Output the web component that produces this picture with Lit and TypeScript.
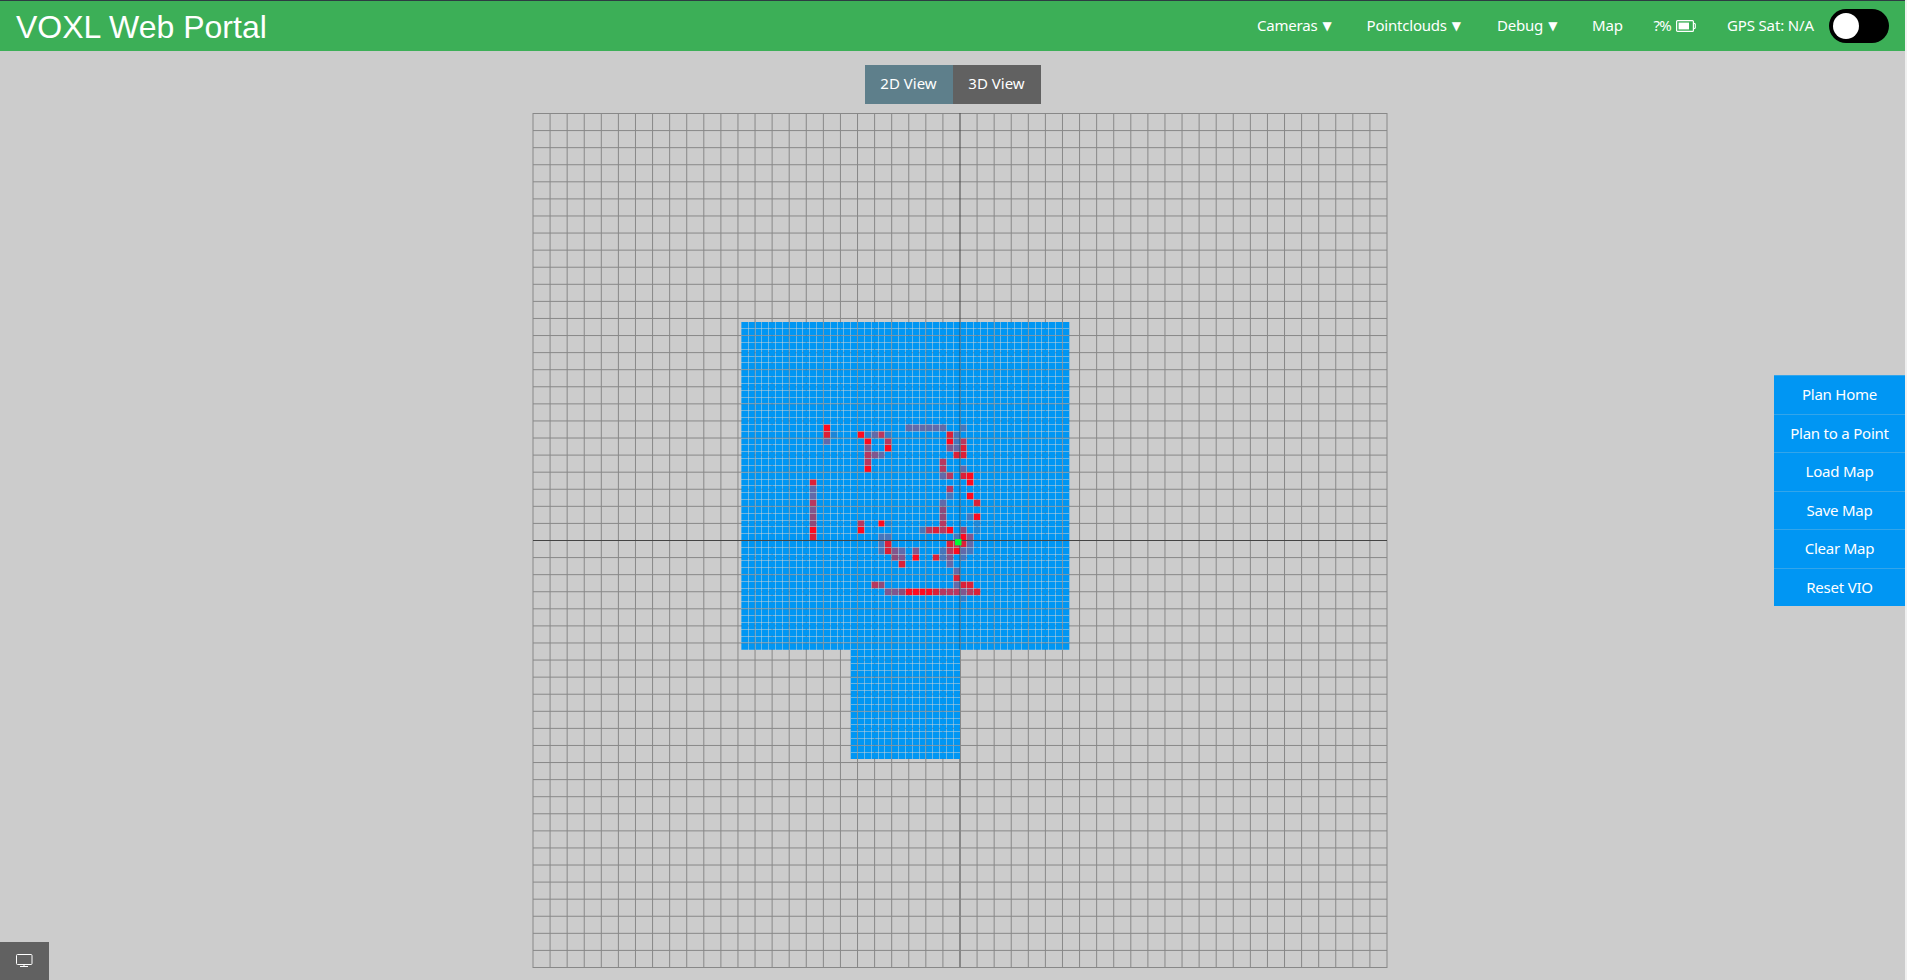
import { LitElement, html, svg, css } from "lit";
import { customElement } from "lit/decorators.js";

const UNIT = 17.08;
const VOXEL = UNIT * 0.4;

/** Occupied voxels as "row: column:heat"; heat runs from 1 (faint) to 9 (solid red). */
const COST: Record<number, string> = {
  15: "12:9 24:4 25:4 26:4 27:4 28:4 29:4 32:3",
  16: "12:8 13:1 17:9 18:2 19:4 20:7 21:2 30:8 31:3",
  17: "12:4 18:9 21:7 30:9 31:3 32:7",
  18: "18:5 21:9 30:5 31:4 32:8",
  19: "18:7 19:5 20:4 31:8 32:8",
  20: "18:7 29:7",
  21: "18:9 29:7 32:4",
  22: "29:4 30:7 32:8 33:9",
  23: "10:8 33:9",
  24: "10:4 30:7",
  25: "10:4 30:3 33:9",
  26: "10:7 29:4 34:8",
  27: "10:5 29:6",
  28: "10:6 29:6 33:3 34:9",
  29: "10:6 17:7 20:9 21:1 29:7 34:1",
  30: "10:9 17:9 26:3 27:7 28:8 29:7 30:9 32:6 34:1",
  31: "10:8 20:3 21:3 31:3 32:9 33:5",
  32: "20:3 21:8 30:8 31:7 32:8 33:4",
  33: "20:3 21:8 22:5 23:4 25:5 29:3 30:7 31:9 32:4 33:3",
  34: "22:6 23:5 25:9 28:8 29:3 30:5 32:3",
  35: "23:8 30:4",
  36: "31:4",
  37: "31:8",
  38: "19:7 20:6 31:4 32:8 33:8",
  39: "21:5 22:5 23:6 24:9 25:9 26:9 27:9 28:8 29:7 30:7 31:7 32:5 33:7 34:8",
  40: "32:2",
};

const HEAT: Record<string, string> = {
  "1": "#1c86d8", "2": "#2f7fcc", "3": "#4577bd", "4": "#616aaa",
  "5": "#80578f", "6": "#8f4a7a", "7": "#b83860", "8": "#dc2038", "9": "#ff0a20",
};

@customElement("map-canvas")
export class MapCanvas extends LitElement {
  static styles = css`
    :host { display: block; width: 856px; height: 856px; }
    svg { display: block; }
    .cell { stroke: #888; stroke-width: 1; }
    .axis { stroke: #444; stroke-width: 1; }
    .floor { fill: #0096f3; }
    .gap { stroke: #d4d4d4; stroke-width: 1; stroke-opacity: 0.5; shape-rendering: crispEdges; }
    .major { stroke: #808080; stroke-width: 1; stroke-opacity: 0.6; }
    .minor { stroke: #50708c; stroke-width: 1.2; stroke-opacity: 0.5; stroke-dasharray: 1.6 5.232; stroke-dashoffset: 0.8; }
    .dim { stroke: #1c4866; stroke-width: 1.6; stroke-opacity: 0.55; }
    .drone { fill: #00ff33; }
  `;

  private grid() {
    return Array.from({ length: 51 }, (_, i) => {
      const p = i * UNIT;
      const cls = i === 25 ? "axis" : "cell";
      return svg`<line class=${cls} x1=${1 + p} x2=${1 + p} y1="1" y2="856"></line>
        <line class=${cls} y1=${1.5 + p} y2=${1.5 + p} x1="1" x2="855"></line>`;
    });
  }

  /** Ground grid lines showing through the seams between voxels. */
  private seams(v: (n: number) => number) {
    const out = [];
    for (let n = -12; n <= 12; n++) {
      const p = 32 + n * 2.5;
      const cls = n % 2 === 0 ? "major" : "minor";
      if (p > 0 && p < 48) {
        const end = p > 16 && p < 32 ? 64 : 48;
        out.push(svg`<line class=${p === 32 ? "dim" : cls} x1=${v(p)} x2=${v(p)} y1="0" y2=${v(end)}></line>`);
      }
      if (p > 0 && p < 64)
        out.push(svg`<line class=${cls} y1=${v(p)} y2=${v(p)} x1=${p < 48 ? 0 : v(16)} x2=${v(p < 48 ? 48 : 32)}></line>`);
    }
    return out;
  }

  render() {
    const c = UNIT * 25;
    const x0 = 1 + c - 32 * VOXEL;
    const y0 = 1.5 + c - 32 * VOXEL;
    const v = (n: number) => n * VOXEL;
    return html`<svg width="856" height="856">
      ${this.grid()}
      <g transform="translate(${x0} ${y0})">
        <path class="floor" d="M0 0H${v(48)}V${v(48)}H${v(32)}V${v(64)}H${v(16)}V${v(48)}H0Z"></path>
        ${Object.entries(COST).map(([row, cells]) =>
          cells.split(" ").map((s) => {
            const [col, heat] = s.split(":");
            return svg`<rect x=${v(+col)} y=${v(+row)} width=${VOXEL} height=${VOXEL} fill=${HEAT[heat]}></rect>`;
          })
        )}
        ${Array.from({ length: 47 }, (_, i) => i + 1).map((i) =>
          svg`<line class="gap" x1=${v(i)} x2=${v(i)} y1="0" y2=${v(i > 16 && i < 32 ? 64 : 48)}></line>`)}
        ${Array.from({ length: 63 }, (_, i) => i + 1).map((i) =>
          svg`<line class="gap" y1=${v(i)} y2=${v(i)} x1=${i < 48 ? 0 : v(16)} x2=${v(i < 48 ? 48 : 32)}></line>`)}
        ${this.seams(v)}
      </g>
      <line class="axis" x1="1" x2="855" y1=${1.5 + c} y2=${1.5 + c}></line>
      <rect class="drone" x="423" y="427" width="6.5" height="6.3"></rect>
    </svg>`;
  }
}

@customElement("app-root")
export class AppRoot extends LitElement {
  static styles = css`
    :host { display: block; position: relative; box-sizing: border-box; height: 980px; overflow: hidden;
      background: #ccc; border-right: 2px solid #f0f0f0; font: 15px "Noto Sans", sans-serif; color: #fff; }
    header { display: flex; align-items: center; box-sizing: border-box; height: 51px; border-top: 1px solid #2d3c42;
      background: #3caf57; padding: 0 16px; }
    h1 { font: 32px "Liberation Sans", sans-serif; margin: 0 auto 0 0; padding-top: 3px; }
    nav { display: grid; grid-template-columns: 109.5px 130.5px 95px 61.5px 73.5px 102px 60px; align-items: center; }
    nav span { white-space: nowrap; line-height: 20px; }
    nav > span { padding-bottom: 2px; letter-spacing: -0.15px; }
    nav > .menu { letter-spacing: -0.2px; }
    .arrow { display: inline-block; margin-left: 5px; letter-spacing: 0; font: 12px "DejaVu Sans", sans-serif;
      transform: translateY(-1px); }
    nav > .power { display: flex; align-items: center; gap: 5px; letter-spacing: -0.8px; }
    .power svg { margin-top: 1px; }
    .switch { width: 60px; height: 34px; border-radius: 17px; background: #000; padding: 4px; box-sizing: border-box; }
    .knob { width: 26px; height: 26px; border-radius: 50%; background: #fff; }
    .tabs { display: flex; justify-content: center; margin: 14px 0 8px; }
    .tab { width: 88px; height: 39px; line-height: 37px; text-align: center; background: #616161; }
    .on { background: #5e7f8b; }
    map-canvas { margin-left: 532px; }
    .actions { position: absolute; right: 0; top: 375px; width: 131px; }
    .action { box-sizing: border-box; height: 38.5px; line-height: 36px; border-top: 1px solid #33a5ea;
      background: #0096f3; text-align: center; letter-spacing: -0.22px; }
    .screen { position: absolute; left: 0; bottom: 0; width: 49px; height: 38px; background: #616161; }
    .screen svg { display: block; }
  `;

  private menu(label: string) {
    return html`<span class="menu">${label}<span class="arrow">▼</span></span>`;
  }

  render() {
    const actions = ["Plan Home", "Plan to a Point", "Load Map", "Save Map", "Clear Map", "Reset VIO"];
    return html`
      <header>
        <h1>VOXL Web Portal</h1>
        <nav>
          ${this.menu("Cameras")}${this.menu("Pointclouds")}${this.menu("Debug")}
          <span>Map</span>
          <span class="power">?%
            <svg width="20" height="12" viewBox="0 0 20 12" fill="none" stroke="#fff">
              <rect x="0.6" y="0.6" width="16.8" height="10.8" rx="1" stroke-width="1.2"></rect>
              <path d="M18 3.2L19.3 4V8L18 8.8" stroke-width="1.1"></path>
              <rect x="2.6" y="2.6" width="10.4" height="6.8" fill="#fff" stroke="none"></rect>
            </svg>
          </span>
          <span>GPS Sat: N/A</span>
          <div class="switch"><div class="knob"></div></div>
        </nav>
      </header>
      <div class="tabs"><div class="tab on">2D View</div><div class="tab">3D View</div></div>
      <map-canvas></map-canvas>
      <div class="actions">${actions.map((a) => html`<div class="action">${a}</div>`)}</div>
      <div class="screen">
        <svg width="49" height="38" fill="none" stroke="#fff">
          <rect x="16.5" y="12.5" width="15.5" height="10" rx="1"></rect>
          <path d="M24 22.5V24.5M20 24.5H28"></path>
        </svg>
      </div>`;
  }
}
